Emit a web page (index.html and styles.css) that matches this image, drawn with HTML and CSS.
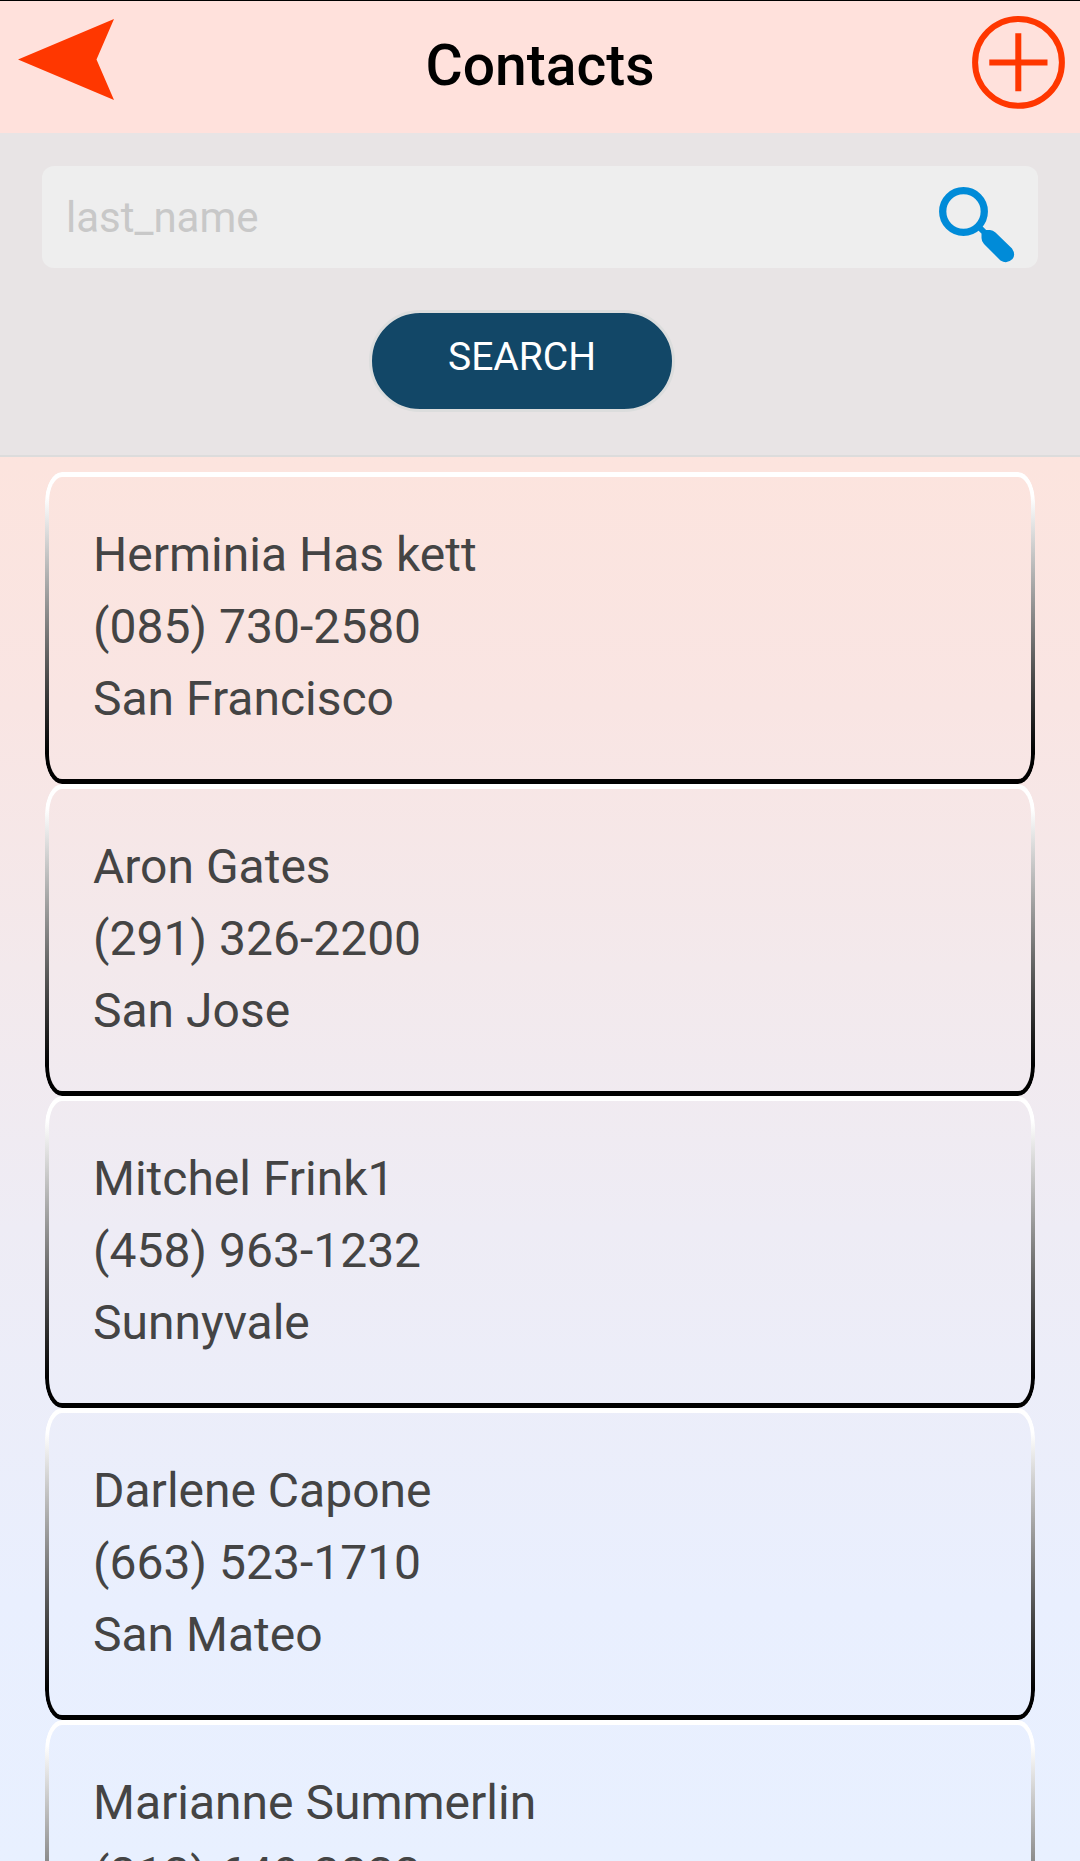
FILE: index.html
```
<!DOCTYPE html>
<html>

<head>
  <meta charset="UTF-8"/>
  <title>Contacts</title>
  <link rel="stylesheet" href="styles.css">
</head>

<body>
  <div class="header">
    <svg class="back" width="96" height="81" viewBox="0 0 96 81">
      <path fill="#ff3700" d="M0 40.500 L96 0 L78.500 40.500 L96 81 Z"/>
    </svg>
    <h1>Contacts</h1>
    <svg class="add" width="94" height="94" viewBox="0 0 94 94">
      <circle cx="47.500" cy="46.400" r="43.400" fill="none" stroke="#ff3700" stroke-width="6"/>
      <path fill="none" stroke="#ff3700" stroke-width="6" d="M18.300 46.400 H76.500 M47.300 17.200 V75.200"/>
    </svg>
  </div>

  <div class="searchpanel">
    <div class="searchbox">
      <span>last_name</span>
      <svg width="76" height="76" viewBox="0 0 76 76">
        <circle cx="24.500" cy="24.500" r="20.800" fill="none" stroke="#008bd8" stroke-width="7.300"/>
        <path stroke="#008bd8" stroke-width="6" d="M38 38 L48 48"/>
        <path fill="#008bd8" d="M46 43 H51 Q54 43 56.500 45.500 L73 61.500 Q77 67.500 73.500 72 Q68 77.500 61.500 73.500 L45 57 Q42.500 54.500 42.500 51 V47 Z"/>
      </svg>
    </div>
    <button class="searchbutton">SEARCH</button>
  </div>

  <div class="contacts">
    <div class="card">
      <p>Herminia Has kett</p>
      <p>(085) 730-2580</p>
      <p>San Francisco</p>
    </div>
    <div class="card">
      <p>Aron Gates</p>
      <p>(291) 326-2200</p>
      <p>San Jose</p>
    </div>
    <div class="card">
      <p>Mitchel Frink1</p>
      <p>(458) 963-1232</p>
      <p>Sunnyvale</p>
    </div>
    <div class="card">
      <p>Darlene Capone</p>
      <p>(663) 523-1710</p>
      <p>San Mateo</p>
    </div>
    <div class="card">
      <p>Marianne Summerlin</p>
      <p>(213) 649-3232</p>
    </div>
  </div>
</body>

</html>
```
FILE: styles.css
```
html, body {
  height: 100%;
  margin: 0;
  padding: 0;
}
body {
  box-sizing: border-box;
  display: flex;
  flex-flow: column nowrap;
  overflow: hidden;
  border-top: 1px #000 solid;
  background: linear-gradient(#ffe1dc 0%, #fce4de 25%, #f9e5e3 38%, #f3e9ec 52%, #eeecf5 66%, #e9effe 86%, #e8f0ff 100%);
  font-family: Roboto, sans-serif;
}
svg {
  display: block;
}

.header {
  flex: 0 0 132px;
  display: flex;
  justify-content: space-between;
  align-items: flex-start;
  box-sizing: border-box;
  padding: 15px 15px 0 18px;
  background-color: #ffe1dc;
}
.header h1 {
  margin: 15px 5px 0 0;
  font-size: 57px;
  font-weight: 500;
  line-height: 70px;
}
.back {
  margin-top: 3px;
}

.searchpanel {
  flex: 0 0 324px;
  box-sizing: border-box;
  padding: 33px 42px 0;
  border-bottom: 2px #dcdcdc solid;
  background-color: #e8e4e5;
}
.searchbox {
  display: flex;
  justify-content: space-between;
  align-items: center;
  box-sizing: border-box;
  height: 102px;
  padding: 16px 23px 0 24px;
  border-radius: 12px;
  background-color: #eee;
}
.searchbox span {
  margin-top: -16px;
  color: #c8c8c8;
  font-size: 42px;
}
.searchbutton {
  display: block;
  box-sizing: border-box;
  width: 306px;
  height: 102px;
  margin: 42px 0 0 327px;
  padding: 0 0 8px;
  border: 3px #dcdddd solid;
  border-radius: 51px;
  background-color: #124767;
  color: #fff;
  font-family: inherit;
  font-size: 39px;
}

.contacts {
  padding: 15px 45px 0;
}
.card {
  position: relative;
  box-sizing: border-box;
  height: 312px;
  padding: 47px 48px 0;
}
/* white to black bevel, masked down to the outline */
.card::before {
  content: "";
  position: absolute;
  inset: 0;
  padding: 5px 4px 5.500px;
  border-radius: 17px / 30px;
  background: linear-gradient(#fff 8%, #000 90%);
  mask: linear-gradient(#000, #000) content-box exclude, linear-gradient(#000, #000);
}
.card p {
  margin: 0;
  color: #444;
  font-size: 48px;
  line-height: 72px;
}
```
